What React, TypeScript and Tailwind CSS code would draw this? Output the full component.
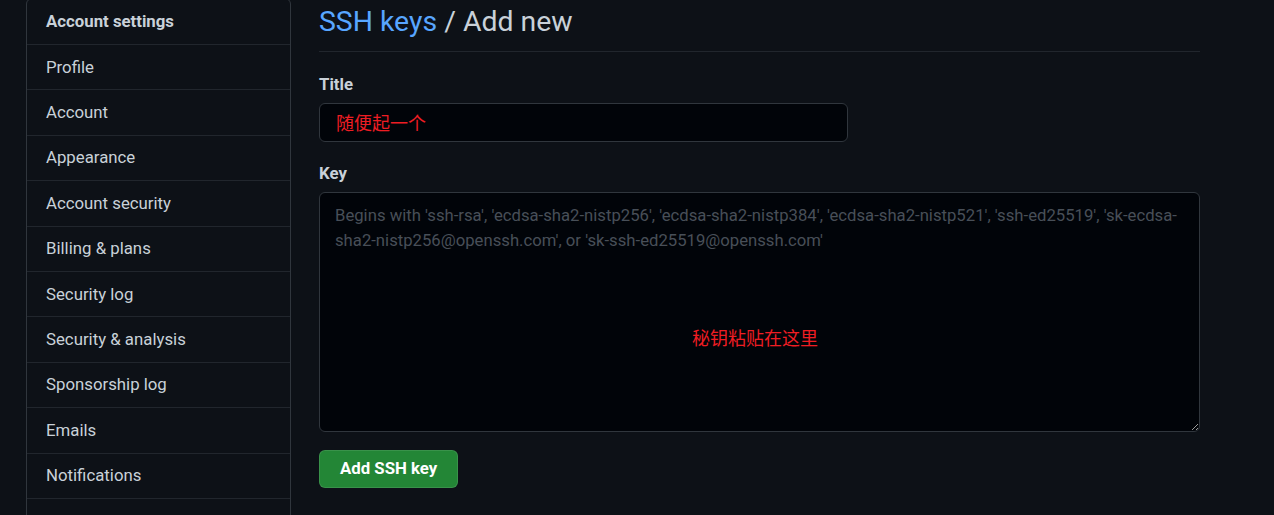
import React from "react";

const items = [
  "Profile",
  "Account",
  "Appearance",
  "Account security",
  "Billing & plans",
  "Security log",
  "Security & analysis",
  "Sponsorship log",
  "Emails",
  "Notifications",
  "Scheduled reminders",
];

const placeholder =
  "Begins with 'ssh-rsa', 'ecdsa-sha2-nistp256', 'ecdsa-sha2-nistp384', 'ecdsa-sha2-nistp521', 'ssh-ed25519', 'sk-ecdsa-\nsha2-nistp256@openssh.com', or 'sk-ssh-ed25519@openssh.com'";

export default function App() {
  return (
    <div className="h-[515px] overflow-hidden bg-[#0d1117] font-['Roboto','Noto_Sans_CJK_SC',sans-serif] text-[#c9d1d9]">
      <div className="flex gap-[28px] pl-[26px]">
        <nav className="-mt-[2.4px] w-[265px] shrink-0 rounded-md border border-[#30363d]">
          <div className="flex h-[45.4px] items-center px-[19px] text-[16.8px] font-bold text-[#c9d1d9]">
            Account settings
          </div>
          {items.map((it) => (
            <div
              key={it}
              className="flex h-[45.4px] items-center border-t border-[#21262d] px-[19px] text-[16.8px] text-[#c9d1d9]"
            >
              {it}
            </div>
          ))}
        </nav>

        <main className="w-[881px] shrink-0">
          <div className="border-b border-[#21262d] pb-[11px] pt-[4px]">
            <h2 className="text-[28.4px] leading-[36px] font-normal">
              <span className="text-[#58a6ff]">SSH keys</span>
              <span className="text-[#c9d1d9]"> / Add new</span>
            </h2>
          </div>

          <form className="mt-[20px]">
            <label className="block text-[16.8px] leading-[25px] font-bold text-[#c9d1d9]">Title</label>
            <div className="mt-[6px] flex h-[39px] w-[529px] items-center rounded-md border border-[#30363d] bg-[#010409] pl-[16px]">
              <span className="text-[18px] text-[#ee1d23] font-['Noto_Sans_CJK_SC',sans-serif]">随便起一个</span>
            </div>

            <label className="mt-[19px] block text-[16.8px] leading-[25px] font-bold text-[#c9d1d9]">Key</label>
            <div className="relative mt-[6px]">
              <textarea
                className="block h-[240px] w-[881px] rounded-md border border-[#30363d] bg-[#010409] pl-[15px] pr-[10px] pt-[10px] text-[16.7px] leading-[25px] text-[#c9d1d9] outline-none placeholder:text-[#484f58]"
                placeholder={placeholder}
              />
              <span className="pointer-events-none absolute left-[373px] top-[132px] text-[18px] text-[#ee1d23] font-['Noto_Sans_CJK_SC',sans-serif]">
                秘钥粘贴在这里
              </span>
            </div>

            <button
              type="button"
              className="mt-[18px] h-[38px] rounded-md border border-[#ffffff1a] bg-[#238636] px-[20px] text-[16.8px] font-bold text-white"
            >
              Add SSH key
            </button>
          </form>
        </main>
      </div>
    </div>
  );
}
